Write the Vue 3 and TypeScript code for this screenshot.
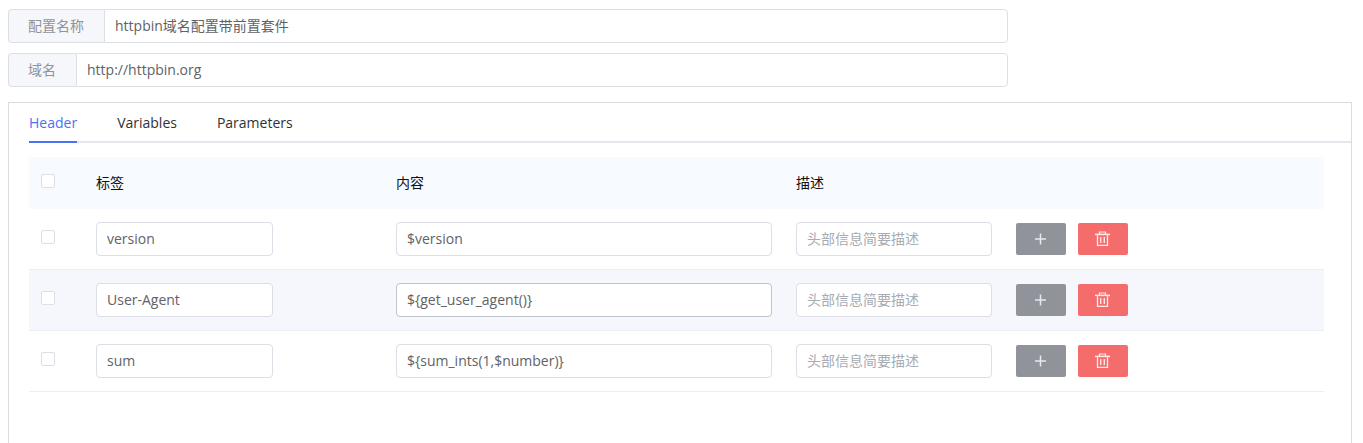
<script setup lang="ts">
import { ref } from 'vue'

interface HeaderRow {
  key: string
  value: string
  desc: string
  checked: boolean
  active?: boolean
}

const configName = ref('httpbin域名配置带前置套件')
const baseUrl = ref('http://httpbin.org')
const tabs = ['Header', 'Variables', 'Parameters']
const activeTab = ref('Header')
const allChecked = ref(false)

const rows = ref<HeaderRow[]>([
  { key: 'version', value: '$version', desc: '', checked: false },
  { key: 'User-Agent', value: '${get_user_agent()}', desc: '', checked: false, active: true },
  { key: 'sum', value: '${sum_ints(1,$number)}', desc: '', checked: false },
])

function toggleAll() {
  rows.value.forEach((row) => (row.checked = allChecked.value))
}

function addRow() {
  rows.value.push({ key: '', value: '', desc: '', checked: false })
}

function removeRow(index: number) {
  rows.value.splice(index, 1)
}
</script>

<template>
  <main class="page">
    <form class="fields" @submit.prevent>
      <div class="group">
        <label class="prepend" for="config-name">配置名称</label>
        <input id="config-name" v-model="configName" class="input group-input" type="text" />
      </div>
      <div class="group">
        <label class="prepend" for="base-url">域名</label>
        <input id="base-url" v-model="baseUrl" class="input group-input" type="text" />
      </div>
    </form>

    <section class="panel">
      <nav class="tabs" role="tablist">
        <button
          v-for="tab in tabs"
          :key="tab"
          type="button"
          role="tab"
          class="tab"
          :class="{ active: tab === activeTab }"
          :aria-selected="tab === activeTab"
          @click="activeTab = tab"
        >
          {{ tab }}
        </button>
      </nav>

      <table class="table">
        <colgroup>
          <col class="col-check" />
          <col class="col-key" />
          <col class="col-value" />
          <col class="col-desc" />
          <col />
        </colgroup>
        <thead>
          <tr>
            <th>
              <input v-model="allChecked" class="check" type="checkbox" aria-label="全选" @change="toggleAll" />
            </th>
            <th>标签</th>
            <th>内容</th>
            <th>描述</th>
            <th></th>
          </tr>
        </thead>
        <tbody>
          <tr v-for="(row, i) in rows" :key="i" :class="{ hovered: row.active }">
            <td><input v-model="row.checked" class="check" type="checkbox" aria-label="选择" /></td>
            <td><input v-model="row.key" class="input key-input" type="text" aria-label="标签" /></td>
            <td>
              <input v-model="row.value" class="input" :class="{ strong: row.active }" type="text" aria-label="内容" />
            </td>
            <td>
              <input v-model="row.desc" class="input" type="text" placeholder="头部信息简要描述" aria-label="描述" />
            </td>
            <td>
              <div class="actions">
                <button type="button" class="btn info" aria-label="添加" @click="addRow">
                  <svg width="16" height="16" viewBox="0 0 16 16" fill="none" stroke="#e9e9eb">
                    <path d="M7.500 2.500v11M2 8h11" stroke-width="1.500" />
                  </svg>
                </button>
                <button type="button" class="btn danger" aria-label="删除" @click="removeRow(i)">
                  <svg width="16" height="16" viewBox="0 0 16 16" fill="none" stroke="#fff" stroke-opacity="0.850">
                    <path d="M4.500 3V1h6v2" stroke-width="1.200" />
                    <path d="M0 3.400h15" stroke-width="1.500" />
                    <path d="M2.500 4.200v10.200h10V4.200" stroke-width="1.300" />
                    <path d="M5.700 6v6M9.300 6v6" stroke-width="1.400" />
                  </svg>
                </button>
              </div>
            </td>
          </tr>
        </tbody>
      </table>
    </section>
  </main>
</template>

<style>
html,
body,
#app {
  height: 100%;
}

body {
  margin: 0;
  background: #fff;
}
</style>

<style scoped>
.page {
  box-sizing: border-box;
  display: flex;
  flex-direction: column;
  min-height: 100%;
  padding: 9px 11px 0 8px;
  color: #303133;
  font-family: 'Open Sans', 'Noto Sans CJK SC', sans-serif;
  font-size: 14px;
  line-height: 20px;
}

.fields {
  display: flex;
  flex-direction: column;
  gap: 10px;
  max-width: 1000px;
}

.group {
  display: flex;
}

.prepend {
  box-sizing: border-box;
  flex: none;
  height: 34px;
  padding: 0 20px 0 19px;
  border: 1px solid #dcdfe6;
  border-right: 0;
  border-radius: 4px 0 0 4px;
  background: #f5f7fa;
  color: #909399;
  line-height: 32px;
}

.input {
  box-sizing: border-box;
  display: block;
  width: 100%;
  height: 34px;
  padding: 0 10px 2px;
  border: 1px solid #dcdfe6;
  border-radius: 4px;
  outline: none;
  background: #fff;
  color: #606266;
  font: inherit;
}

.input::placeholder {
  color: #a8abb2;
  opacity: 1;
}

.input.strong {
  border-color: #c0c4cc;
}

.group-input {
  flex: 1;
  min-width: 0;
  border-radius: 0 4px 4px 0;
}

.key-input {
  max-width: 177px;
}

.panel {
  flex: 1;
  margin-top: 15px;
  padding-left: 20px;
  border: 1px solid #dcdcdf;
  border-bottom: 0;
}

.tabs {
  display: flex;
  gap: 40px;
  box-shadow: inset 0 -2px #e4e7ed;
}

.tab {
  height: 40px;
  padding: 2px 0 0;
  border: 0;
  border-bottom: 2px solid transparent;
  background: none;
  color: #303133;
  font: inherit;
  cursor: pointer;
}

.tab.active {
  border-bottom-color: #4a72f5;
  color: #4a72f5;
}

.table {
  width: calc(100% - 27px);
  margin-top: 14px;
  border-collapse: separate;
  border-spacing: 0;
  table-layout: fixed;
}

.col-check {
  width: 55px;
}

.col-key {
  width: 300px;
}

.col-value {
  width: 400px;
}

.col-desc {
  width: 220px;
}

th {
  height: 52px;
  padding: 0 12px;
  background: #f7faff;
  color: #111;
  font-weight: 400;
  text-align: left;
}

td {
  height: 60px;
  padding: 0 12px;
  border-bottom: 1px solid #ebeef5;
  background: #fff;
}

.hovered td {
  background: #f5f7fc;
}

.check {
  appearance: none;
  box-sizing: border-box;
  display: block;
  width: 14px;
  height: 14px;
  margin: 0 0 4px;
  border: 1px solid #dcdfe6;
  border-radius: 2px;
  background: #fff;
}

.check:checked {
  background: #4a72f5;
}

.actions {
  display: flex;
  gap: 12px;
}

.btn {
  display: flex;
  align-items: center;
  justify-content: center;
  width: 50px;
  height: 32px;
  padding: 0;
  border: 0;
  border-radius: 2px;
  cursor: pointer;
}

.info {
  background: #909399;
}

.danger {
  background: #f56c6c;
}
</style>
